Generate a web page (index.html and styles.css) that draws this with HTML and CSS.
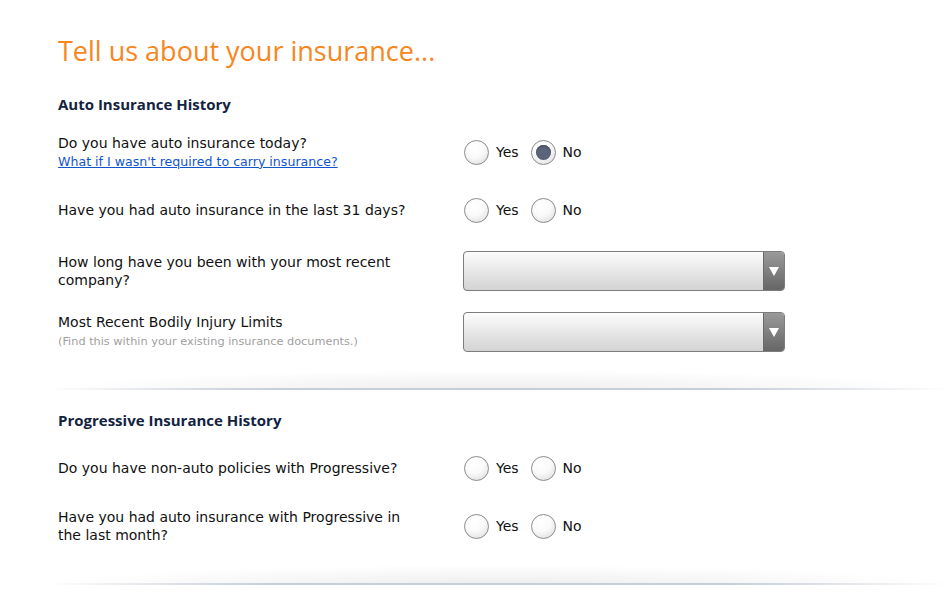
FILE: index.html
```html
<!DOCTYPE html>
<html lang="en">
<head>
	<meta charset="UTF-8">
	<title>Tell us about your insurance</title>
	<link rel="stylesheet" href="styles.css">
</head>
<body>
	<div id="page">
		<h1 class="title">Tell us about your insurance...</h1>

		<div class="section">
			<h2 class="section-title">Auto Insurance History</h2>

			<div class="row first">
				<div class="label">
					Do you have auto insurance today?<br>
					<a href="#" class="help">What if I wasn't required to carry insurance?</a>
				</div>
				<div class="control">
					<label class="radio"><span class="dot"></span>Yes</label>
					<label class="radio"><span class="dot checked"></span>No</label>
				</div>
			</div>

			<div class="row">
				<div class="label">Have you had auto insurance in the last 31 days?</div>
				<div class="control">
					<label class="radio"><span class="dot"></span>Yes</label>
					<label class="radio"><span class="dot"></span>No</label>
				</div>
			</div>

			<div class="row">
				<div class="label">How long have you been with your most recent company?</div>
				<div class="control">
					<div class="select"><span class="arrow"></span></div>
				</div>
			</div>

			<div class="row">
				<div class="label">
					Most Recent Bodily Injury Limits<br>
					<span class="hint">(Find this within your existing insurance documents.)</span>
				</div>
				<div class="control">
					<div class="select"><span class="arrow"></span></div>
				</div>
			</div>
		</div>
		<div class="divider"></div>

		<div class="section second">
			<h2 class="section-title">Progressive Insurance History</h2>

			<div class="row first">
				<div class="label">Do you have non-auto policies with Progressive?</div>
				<div class="control">
					<label class="radio"><span class="dot"></span>Yes</label>
					<label class="radio"><span class="dot"></span>No</label>
				</div>
			</div>

			<div class="row">
				<div class="label">Have you had auto insurance with Progressive in the last month?</div>
				<div class="control">
					<label class="radio"><span class="dot"></span>Yes</label>
					<label class="radio"><span class="dot"></span>No</label>
				</div>
			</div>
		</div>
		<div class="divider last"></div>
	</div>
</body>
</html>
```

FILE: styles.css
```css
*{
	margin: 0;
	padding: 0;
	box-sizing: border-box;
}
body{
	background: #fff;
	font-family: "DejaVu Sans", Verdana, sans-serif;
	font-size: 14px;
	color: #111;
}
#page{
	width: 949px;
	padding-top: 32px;
}
.title{
	padding-left: 58px;
	font-family: "Open Sans", "Noto Sans", sans-serif;
	font-weight: normal;
	font-size: 27px;
	line-height: 38px;
	color: #f7861c;
}
.section{
	padding: 0 0 0 58px;
}
.section-title{
	font-family: "Open Sans", "Noto Sans", sans-serif;
	font-weight: 700;
	font-size: 15px;
	line-height: 20px;
	color: #13233f;
	margin: 24px 0 18px;
}
.second .section-title{
	margin-top: 20px;
	margin-bottom: 18px;
}
.row{
	display: flex;
	align-items: center;
	height: 40px;
	margin-top: 21px;
}
.row.first{
	margin-top: 0;
}
.row.first + .row{
	margin-top: 18px;
}
.label{
	width: 405px;
	padding-right: 52px;
	line-height: 18px;
}
.help{
	color: #1155cc;
	font-size: 12.6px;
}
.hint{
	color: #a0a0a0;
	font-size: 11.3px;
}
.control{
	display: flex;
	align-items: center;
}
.radio{
	display: flex;
	align-items: center;
	margin-right: 12px;
	cursor: pointer;
}
.radio:first-child{
	margin-left: 1px;
}
.dot{
	width: 25px;
	height: 25px;
	border-radius: 50%;
	border: 1px solid #8c8c8c;
	background: radial-gradient(circle at 40% 30%, #fff 0%, #fafafa 45%, #d8d8d8 100%);
	margin-right: 7px;
	position: relative;
}
.dot.checked::after{
	content: "";
	position: absolute;
	left: 4px;
	top: 4px;
	width: 15px;
	height: 15px;
	border-radius: 50%;
	background: #5b6478;
	box-shadow: inset 0 1px 2px #3e4658;
}
.select{
	width: 322px;
	height: 40px;
	border: 1px solid #7d7d7d;
	border-radius: 4px;
	background: linear-gradient(#fcfcfc, #d3d3d3);
	display: flex;
	justify-content: flex-end;
	overflow: hidden;
}
.arrow{
	width: 21px;
	border-left: 1px solid #6a6a6a;
	background: linear-gradient(#9a9a9a, #666);
	display: flex;
	align-items: center;
	justify-content: center;
}
.arrow::before{
	content: "";
	border-left: 5px solid transparent;
	border-right: 5px solid transparent;
	border-top: 9px solid #fff;
}
.divider{
	height: 22px;
	margin: 16px 0 0 48px;
	background:
		linear-gradient(to right, rgba(200,208,218,0), #c6ced8 25%, #c6ced8 75%, rgba(200,208,218,0)) bottom / 100% 2px no-repeat,
		radial-gradient(ellipse 50% 100% at 50% 100%, rgba(0,0,0,0.07), rgba(0,0,0,0) 100%) bottom / 100% 20px no-repeat;
}
.divider.last{
	margin-top: 17px;
}
```
